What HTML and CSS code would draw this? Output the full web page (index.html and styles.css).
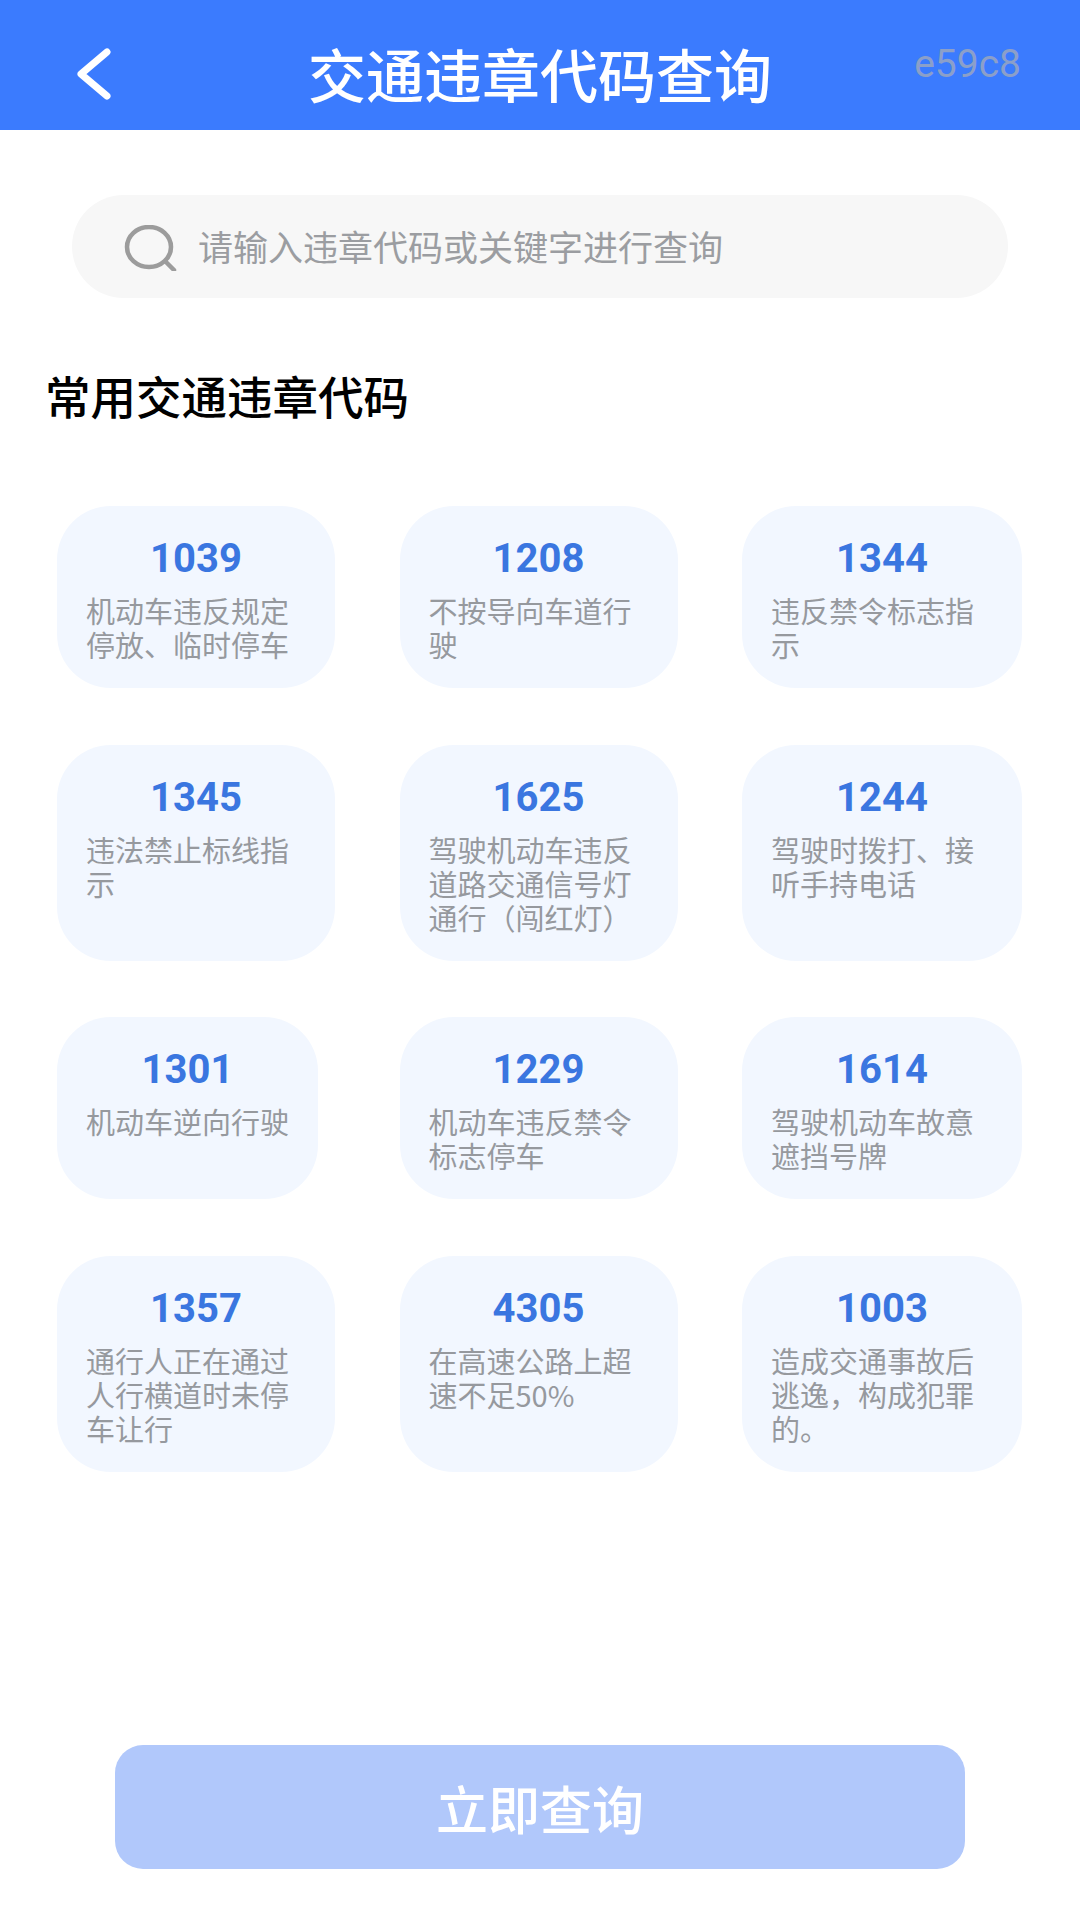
FILE: index.html
```html
<!DOCTYPE html>
<html lang="zh-CN">
<head>
<meta charset="utf-8">
<title>交通违章代码查询</title>
<link rel="stylesheet" href="styles.css">
</head>
<body>
<div class="page">
  <header class="topbar">
    <svg class="back" viewBox="0 0 36 52" width="36" height="52" aria-hidden="true"><path d="M31 4 L5 26 L31 48" fill="none" stroke="#fff" stroke-width="7" stroke-linecap="round" stroke-linejoin="round"/></svg>
    <h1 class="title">交通违章代码查询</h1>
    <span class="tag">e59c8</span>
  </header>

  <div class="search">
    <svg class="search-icon" viewBox="0 0 54 46" width="54" height="46" aria-hidden="true"><ellipse cx="25" cy="22" rx="22" ry="20" fill="none" stroke="#9c9c9c" stroke-width="4.5"/><path d="M42 37 L50 45" fill="none" stroke="#9c9c9c" stroke-width="4.5" stroke-linecap="round"/></svg>
    <span class="placeholder">请输入违章代码或关键字进行查询</span>
  </div>

  <h2 class="section-title">常用交通违章代码</h2>

  <div class="grid">
    <div class="card"><div class="code">1039</div><div class="desc">机动车违反规定停放、临时停车</div></div>
    <div class="card"><div class="code">1208</div><div class="desc">不按导向车道行驶</div></div>
    <div class="card"><div class="code">1344</div><div class="desc">违反禁令标志指示</div></div>
    <div class="card"><div class="code">1345</div><div class="desc">违法禁止标线指示</div></div>
    <div class="card"><div class="code">1625</div><div class="desc">驾驶机动车违反道路交通信号灯通行（闯红灯）</div></div>
    <div class="card"><div class="code">1244</div><div class="desc">驾驶时拨打、接听手持电话</div></div>
    <div class="card"><div class="code">1301</div><div class="desc">机动车逆向行驶</div></div>
    <div class="card"><div class="code">1229</div><div class="desc">机动车违反禁令标志停车</div></div>
    <div class="card"><div class="code">1614</div><div class="desc">驾驶机动车故意遮挡号牌</div></div>
    <div class="card"><div class="code">1357</div><div class="desc">通行人正在通过人行横道时未停车让行</div></div>
    <div class="card"><div class="code">4305</div><div class="desc">在高速公路上超速不足50%</div></div>
    <div class="card"><div class="code">1003</div><div class="desc">造成交通事故后逃逸，构成犯罪的。</div></div>
  </div>

  <button class="submit" type="button">立即查询</button>
</div>
</body>
</html>
```
FILE: styles.css
```css
* { box-sizing: border-box; }
html, body { margin: 0; padding: 0; background: #fff; }
body { font-family: "Noto Sans CJK SC", "Noto Sans", Roboto, sans-serif; }
.page {
  width: 1080px;
  height: 1920px;
  display: flex;
  flex-direction: column;
  overflow: hidden;
}
.topbar {
  height: 130px;
  flex: none;
  background: #3b7bfe;
  display: grid;
  grid-template-columns: 1fr auto 1fr;
  align-items: center;
  padding: 0 59px 0 76px;
}
.back { justify-self: start; margin-top: 18px; }
.title {
  margin: 18px 0 0 -17px;
  color: #fff;
  font-size: 58px;
  line-height: 1.2;
  font-weight: 500;
  white-space: nowrap;
}
.tag {
  justify-self: end;
  margin-top: -2px;
  color: #8b9fc9;
  font-family: Roboto, sans-serif;
  font-size: 39px;
}
.search {
  margin: 65px 72px 0 72px;
  height: 103px;
  flex: none;
  border-radius: 52px;
  background: #f7f7f7;
  display: flex;
  align-items: center;
  gap: 20px;
  padding-left: 52px;
}
.search-icon { flex: none; margin-top: 2px; }
.placeholder { color: #9b9da1; font-size: 35px; line-height: 1; white-space: nowrap; margin-top: -2px; }
.section-title {
  margin: 69px 0 0 45px;
  color: #000;
  font-size: 45.5px;
  line-height: 56px;
  font-weight: 500;
}
.grid {
  margin: 83px 58px 0 57px;
  display: grid;
  grid-template-columns: 278px 278px 280px;
  column-gap: 64.5px;
  row-gap: 56.5px;
}
.card {
  justify-self: start;
  max-width: 100%;
  background: #f2f7ff;
  border-radius: 54px;
  padding: 31px 29px 27px;
}
.card:nth-child(3n) { width: 100%; }
.code {
  color: #3a76e0;
  font-family: Roboto, sans-serif;
  font-size: 40px;
  line-height: 44px;
  font-weight: 700;
  text-align: center;
  margin-bottom: 12px;
}
.desc {
  color: #96999e;
  font-size: 29px;
  line-height: 34px;
}
.submit {
  margin: auto 0 51px 115px;
  width: 850px;
  height: 124px;
  flex: none;
  border: 0;
  border-radius: 28px;
  background: #b1c8fb;
  color: #fff;
  font-family: inherit;
  font-size: 52px;
  font-weight: 500;
}
```
